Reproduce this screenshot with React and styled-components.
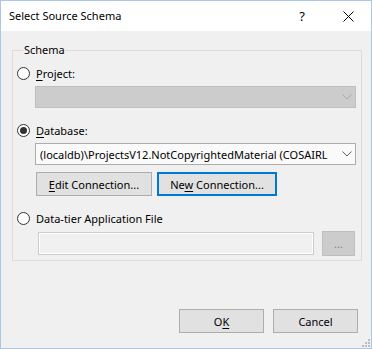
import React from 'react';
import styled, { createGlobalStyle } from 'styled-components';

const GlobalStyle = createGlobalStyle`
  html, body {
    margin: 0;
    padding: 0;
    background: #ffffff;
  }
  body {
    font-family: "Noto Sans", "Liberation Sans", sans-serif;
    font-size: 11px;
    color: #000;
  }
`;

const Window = styled.div`
  position: relative;
  box-sizing: border-box;
  width: 372px;
  height: 349px;
  border: 1px solid #aac8e6;
  background: #f0f0f0;
  display: flex;
  flex-direction: column;
`;

const TitleBar = styled.div`
  height: 30px;
  background: #ffffff;
  display: flex;
  align-items: center;
  padding-left: 8px;
`;

const Title = styled.div`
  flex: 1;
  font-size: 11px;
  line-height: 16px;
  margin-top: -1px;
`;

const TitleButton = styled.div`
  width: ${(p) => p.w}px;
  height: 30px;
  display: flex;
  align-items: center;
  justify-content: center;
  font-size: 13px;
  color: #000;
`;

const Body = styled.div`
  flex: 1;
  display: flex;
  flex-direction: column;
  padding: 11px 10px 0 11px;
`;

const Group = styled.fieldset`
  margin: 0;
  padding: 0 5px 4px 4px;
  border: 1px solid #dcdcdc;
  width: 350px;
  box-sizing: border-box;
  display: flex;
  flex-direction: column;
`;

const Legend = styled.legend`
  margin-left: 6px;
  padding: 0 1px;
  line-height: 16px;
`;

const RadioRow = styled.label`
  display: flex;
  align-items: center;
  height: 16px;
  margin-top: ${(p) => p.mt}px;
`;

const Radio = styled.span`
  box-sizing: border-box;
  width: 13px;
  height: 13px;
  border-radius: 50%;
  border: 1px solid #333333;
  background: #ffffff;
  display: flex;
  align-items: center;
  justify-content: center;
  margin-right: 6px;
  &::after {
    content: '';
    width: 7px;
    height: 7px;
    border-radius: 50%;
    background: ${(p) => (p.checked ? '#333333' : 'transparent')};
  }
`;

const Key = styled.span`
  text-decoration: underline;
  text-underline-offset: 2px;
`;

const Combo = styled.div`
  box-sizing: border-box;
  height: 22px;
  margin: ${(p) => p.mt}px 0 0 18px;
  width: 321px;
  display: flex;
  align-items: center;
  padding-left: 4px;
  border: 1px solid ${(p) => (p.disabled ? '#bfbfbf' : '#adadad')};
  background: ${(p) => (p.disabled ? '#cccccc' : '#fafafa')};
  overflow: hidden;
`;

const ComboText = styled.span`
  flex: 1;
  white-space: nowrap;
  overflow: hidden;
`;

const Chevron = styled.span`
  width: 17px;
  flex: none;
  display: flex;
  align-items: center;
  justify-content: center;
`;

const ButtonRow = styled.div`
  display: flex;
  gap: 5px;
  margin: 7px 0 0 19px;
`;

const Button = styled.button`
  box-sizing: border-box;
  width: ${(p) => p.w}px;
  height: ${(p) => p.h || 24}px;
  padding: 0;
  font: inherit;
  color: ${(p) => (p.disabled ? '#838383' : '#000')};
  background: ${(p) => (p.disabled ? '#cccccc' : '#e1e1e1')};
  border: ${(p) =>
    p.focused ? '2px solid #0078d7' : p.disabled ? '1px solid #bfbfbf' : '1px solid #adadad'};
`;

const FileRow = styled.div`
  display: flex;
  align-items: center;
  gap: 8px;
  margin: 5px 0 0 21px;
  height: 25px;
`;

const TextField = styled.div`
  box-sizing: border-box;
  width: 276px;
  height: 23px;
  border: 1px solid #cccccc;
  background: #f0f0f0;
  box-shadow: inset 0 0 0 1px #ffffff;
`;

const Footer = styled.div`
  flex: 1;
  display: flex;
  justify-content: flex-end;
  align-items: flex-start;
  gap: 9px;
  padding: 48px 3px 0 0;
`;

const Grip = styled.svg`
  position: absolute;
  right: 1px;
  bottom: 1px;
`;

const ChevronIcon = ({ color }) => (
  <svg width="10" height="6" viewBox="0 0 10 6">
    <path d="M0.5 0.5 L5 5 L9.5 0.5" fill="none" stroke={color} strokeWidth="1" />
  </svg>
);

export default function App() {
  return (
    <>
      <GlobalStyle />
      <Window>
        <TitleBar>
          <Title>Select Source Schema</Title>
          <TitleButton w={46}>?</TitleButton>
          <TitleButton w={46}>
            <svg width="11" height="11" viewBox="0 0 11 11">
              <path d="M0.5 0.5 L10.5 10.5 M10.5 0.5 L0.5 10.5" stroke="#000" strokeWidth="1" />
            </svg>
          </TitleButton>
        </TitleBar>
        <Body>
          <Group>
            <Legend>Schema</Legend>
            <RadioRow mt={7}>
              <Radio />
              <span>
                <Key>P</Key>roject:
              </span>
            </RadioRow>
            <Combo disabled mt={5}>
              <ComboText />
              <Chevron>
                <ChevronIcon color="#a8a8a8" />
              </Chevron>
            </Combo>
            <RadioRow mt={14}>
              <Radio checked />
              <span>
                <Key>D</Key>atabase:
              </span>
            </RadioRow>
            <Combo mt={5}>
              <ComboText>(localdb)\ProjectsV12.NotCopyrightedMaterial (COSAIRL</ComboText>
              <Chevron>
                <ChevronIcon color="#606060" />
              </Chevron>
            </Combo>
            <ButtonRow>
              <Button w={116}>
                <Key>E</Key>dit Connection...
              </Button>
              <Button w={120} focused>
                Ne<Key>w</Key> Connection...
              </Button>
            </ButtonRow>
            <RadioRow mt={14}>
              <Radio />
              <span>Data-tier Application File</span>
            </RadioRow>
            <FileRow>
              <TextField />
              <Button w={33} h={25} disabled>
                ...
              </Button>
            </FileRow>
          </Group>
          <Footer>
            <Button w={85}>
              O<Key>K</Key>
            </Button>
            <Button w={85}>Cancel</Button>
          </Footer>
        </Body>
        <Grip width="9" height="9" viewBox="0 0 9 9">
          {[
            [7, 1],
            [7, 4],
            [4, 4],
            [7, 7],
            [4, 7],
            [1, 7],
          ].map(([x, y]) => (
            <rect key={`${x}-${y}`} x={x} y={y} width="2" height="2" fill="#bcbcbc" />
          ))}
        </Grip>
      </Window>
    </>
  );
}
